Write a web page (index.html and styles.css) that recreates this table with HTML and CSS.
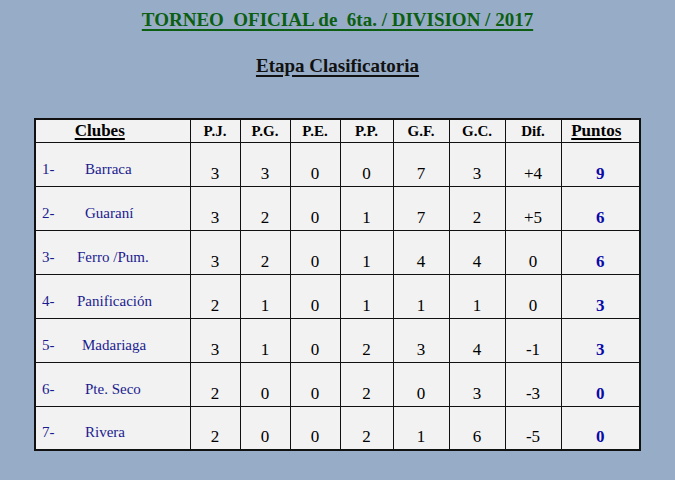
FILE: index.html
```html
<!DOCTYPE html>
<html lang="es">
<head>
<meta charset="utf-8">
<title>Torneo Oficial 6ta. División 2017</title>
<link rel="stylesheet" href="styles.css">
</head>
<body>
<div class="page">
  <h1 class="title">TORNEO&nbsp; OFICIAL de&nbsp; 6ta. / DIVISION / 2017</h1>
  <h2 class="subtitle">Etapa Clasificatoria</h2>
  <table class="standings">
    <colgroup>
      <col class="c-club"><col class="c-s"><col class="c-s"><col class="c-s"><col class="c-m"><col class="c-l"><col class="c-l"><col class="c-l"><col class="c-pts">
    </colgroup>
    <thead>
      <tr>
        <th class="h-club"><span class="u">Clubes</span></th>
        <th>P.J.</th><th>P.G.</th><th>P.E.</th><th>P.P.</th><th>G.F.</th><th>G.C.</th><th>Dif.</th>
        <th class="h-pts"><span class="u">Puntos</span></th>
      </tr>
    </thead>
    <tbody>
      <tr><td class="club"><span class="pos">1-</span><span class="name">Barraca</span></td><td>3</td><td>3</td><td>0</td><td>0</td><td>7</td><td>3</td><td>+4</td><td class="pts">9</td></tr>
      <tr><td class="club"><span class="pos">2-</span><span class="name">Guaraní</span></td><td>3</td><td>2</td><td>0</td><td>1</td><td>7</td><td>2</td><td>+5</td><td class="pts">6</td></tr>
      <tr><td class="club"><span class="pos">3-</span><span class="name name-wide">Ferro /Pum.</span></td><td>3</td><td>2</td><td>0</td><td>1</td><td>4</td><td>4</td><td>0</td><td class="pts">6</td></tr>
      <tr><td class="club"><span class="pos">4-</span><span class="name name-wide">Panificación</span></td><td>2</td><td>1</td><td>0</td><td>1</td><td>1</td><td>1</td><td>0</td><td class="pts">3</td></tr>
      <tr><td class="club"><span class="pos">5-</span><span class="name name-mid">Madariaga</span></td><td>3</td><td>1</td><td>0</td><td>2</td><td>3</td><td>4</td><td>-1</td><td class="pts">3</td></tr>
      <tr><td class="club"><span class="pos">6-</span><span class="name">Pte. Seco</span></td><td>2</td><td>0</td><td>0</td><td>2</td><td>0</td><td>3</td><td>-3</td><td class="pts">0</td></tr>
      <tr><td class="club"><span class="pos">7-</span><span class="name">Rivera</span></td><td>2</td><td>0</td><td>0</td><td>2</td><td>1</td><td>6</td><td>-5</td><td class="pts">0</td></tr>
    </tbody>
  </table>
</div>
</body>
</html>
```
FILE: styles.css
```css
html, body {
  margin: 0;
  padding: 0;
  background: #97acc6;
}
body {
  font-family: "Liberation Serif", "Times New Roman", serif;
  color: #000;
  width: 675px;
  height: 480px;
  overflow: hidden;
}
.page {
  display: flex;
  flex-direction: column;
  align-items: center;
  padding-top: 8px;
}
.title {
  margin: 0;
  font-size: 19px;
  line-height: 24px;
  font-weight: bold;
  color: #0b5e12;
  text-decoration: underline;
  text-decoration-thickness: 2px;
  text-underline-offset: 3px;
  white-space: nowrap;
}
.subtitle {
  margin: 22px 0 0 0;
  font-size: 19px;
  line-height: 24px;
  font-weight: bold;
  color: #111;
  text-decoration: underline;
  text-decoration-thickness: 2px;
  text-underline-offset: 3px;
}
.standings {
  margin-top: 40px;
  border-collapse: collapse;
  table-layout: fixed;
  width: 606px;
  background: #f2f2f2;
  border: 2px solid #111;
}
.c-club { width: 155px; }
.c-s { width: 50px; }
.c-m { width: 53px; }
.c-l { width: 56px; }
.c-pts { width: 79px; }
.standings th,
.standings td {
  border: 1px solid #111;
  padding: 0;
  text-align: center;
  box-sizing: border-box;
}
.standings th {
  height: 23px;
  font-size: 15px;
  font-weight: bold;
  vertical-align: middle;
  line-height: 18px;
}
.standings th.h-club,
.standings th.h-pts {
  font-size: 17px;
}
.standings th.h-club {
  padding-right: 26px;
}
.standings th.h-pts {
  padding-right: 8px;
}
.u {
  text-decoration: underline;
  text-decoration-thickness: 2px;
  text-underline-offset: 2px;
}
.standings td {
  height: 44px;
  font-size: 17px;
  line-height: 18px;
  vertical-align: bottom;
  padding-bottom: 3px;
}
.standings td.club {
  text-align: left;
  color: #1b1b8f;
  font-size: 15px;
  padding-bottom: 8px;
  white-space: nowrap;
}
.pos {
  display: inline-block;
  width: 49px;
  padding-left: 6px;
  box-sizing: border-box;
}
.name-wide { margin-left: -8px; }
.name-mid { margin-left: -3px; }
.standings td.pts {
  color: #0a0aa8;
  font-weight: bold;
}
```
